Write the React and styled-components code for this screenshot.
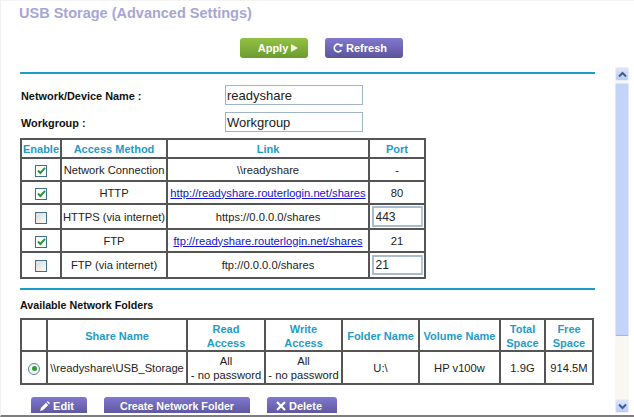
import React from "react";
import styled, { createGlobalStyle } from "styled-components";

const Global = createGlobalStyle`
  html, body { margin: 0; padding: 0; background: #fff; }
  body { width: 634px; height: 417px; overflow: hidden; font-family: "Liberation Sans", Arial, sans-serif; color: #222; }
`;

const Frame = styled.div`
  width: 634px; height: 417px; box-sizing: border-box;
  border-bottom: 2px solid #7d7d7d; border-left: 1px solid #f0f0f0;
  border-top: 1px solid #f4f4f4;
  background: #fff;
`;
const Scroller = styled.div`
  display: flex; height: 412px; overflow: hidden;
`;
const Content = styled.main`
  width: 575px; padding-left: 19px; flex: none;
`;
const Title = styled.h1`
  margin: 3px 0 0 -1px; font-size: 14.5px; line-height: 18px; font-weight: bold; color: #a6a6d6;
  white-space: nowrap;
`;
const Toolbar = styled.div`
  display: flex; gap: 17px; margin-top: 16px; padding-left: 220px;
`;
const Button = styled.button`
  display: inline-flex; align-items: center; justify-content: center; gap: 3px;
  box-sizing: border-box; width: ${p => p.$w}px; height: ${p => p.$h || 20}px;
  padding: 0 ${p => p.$pr || 0}px 0 ${p => p.$pl || 0}px; border: 0; border-radius: 3px;
  background: ${p => p.$green
    ? "linear-gradient(#93c044, #6c9c2f)"
    : "linear-gradient(#8078cf, #5c5499)"};
  color: #fff; font: bold ${p => p.$size || 11}px "Liberation Sans", Arial, sans-serif;
  flex: none;
`;
const Rule = styled.hr`
  height: 2px; margin: ${p => p.$top}px 0 0; border: 0; background: #1c9ccb; width: 575px;
`;
const Field = styled.div`
  display: flex; align-items: center; height: 20px; margin-top: ${p => p.$top}px;
`;
const Label = styled.label`
  width: 205px; flex: none; padding: 1px 0 0 1px; box-sizing: border-box;
  font-size: 10.9px; font-weight: bold; color: #111;
`;
const TextBox = styled.input`
  box-sizing: border-box; width: 138px; height: 20px; padding: 1px 1px 0; margin: 0;
  border: 1px solid #9fb4cb; font: 13px "Liberation Sans", Arial, sans-serif; color: #222; outline: 0;
`;
const Table = styled.table`
  border-collapse: collapse; table-layout: fixed; width: ${p => p.$w}px; margin-top: ${p => p.$top}px;
  font-size: 11.2px;
  text-align: center;
`;
const Head = styled.th`
  border: 2px solid #555; padding: ${p => p.$nudge ? 1 : 0}px 0 0; color: #1f9bc8; font-size: 11px; font-weight: bold; line-height: 14px;
`;
const Cell = styled.td`
  border: 2px solid #555; padding: ${p => p.$nudge ? 1 : 0}px 0 0; line-height: 14px; color: #222; white-space: nowrap;
`;
const Row = styled.tr`
  height: ${p => p.$h}px;
`;
const Link = styled.a`
  color: #1414cc; text-decoration: underline;
`;
const Box = styled.span`
  display: inline-flex; align-items: center; justify-content: center; vertical-align: middle;
  width: 12px; height: 12px; box-sizing: border-box;
  border: 1px solid #3f6f8f;
  background: ${p => p.$on ? "#fff" : "linear-gradient(135deg, #dcdcd6, #fafafa)"};
`;
const Radio = styled.span`
  display: inline-flex; align-items: center; justify-content: center; vertical-align: middle;
  width: 12px; height: 12px; box-sizing: border-box; border-radius: 50%;
  border: 1px solid #5a8299; background: #f4f6f4;
  &::after { content: ""; width: 5px; height: 5px; border-radius: 50%; background: #2f9a3a; }
`;
const PortInput = styled.input`
  display: block; box-sizing: border-box; width: 51px; height: ${p => p.$h}px; margin: 0 auto; padding: 0 2px;
  border: 2px solid #a9bccf; border-right-color: #b8c8d8; font: 12px "Liberation Sans", Arial, sans-serif; color: #222; outline: 0;
`;
const Section = styled.h2`
  margin: 8px 0 0; font-size: 10.7px; line-height: 14px; font-weight: bold; color: #111;
`;
const Actions = styled.div`
  display: flex; gap: 17px; margin-top: 12px; padding-left: 11px;
`;
const ScrollBar = styled.div`
  width: 14px; margin-left: 20px; margin-top: 66px; flex: none; height: 346px;
  background: #f8f7f2; display: flex; flex-direction: column; justify-content: space-between;
`;
const ScrollButton = styled.div`
  height: 14px; box-sizing: border-box; display: flex; align-items: center; justify-content: center;
  background: linear-gradient(#dde6fb, #bccdf2); border: 1px solid #e8eefb; border-radius: 2px;
`;
const Thumb = styled.div`
  height: 253px; margin-top: 2px; box-sizing: border-box; background: #c4d3f8;
  border: 1px solid #dde6fb; border-bottom-color: #9fb3e4; border-radius: 2px;
`;
const Track = styled.div`
  flex: 1; display: flex; flex-direction: column;
`;

const Check = () => (
  <svg width="9" height="9" viewBox="0 0 9 9"><path d="M1 4.5 L3.4 7 L8 1.8" fill="none" stroke="#1f9a2e" strokeWidth="1.9" /></svg>
);
const Chevron = ({ up }) => (
  <svg width="9" height="7" viewBox="0 0 9 7">
    <path d={up ? "M1 5.5 L4.5 2 L8 5.5" : "M1 1.5 L4.5 5 L8 1.5"} fill="none" stroke="#3d5f8f" strokeWidth="2" />
  </svg>
);
const Play = () => (
  <svg width="7" height="8" viewBox="0 0 7 8"><path d="M0 0 L7 4 L0 8 Z" fill="#f2f7e6" /></svg>
);
const Reload = () => (
  <svg width="10" height="10" viewBox="0 0 10 10">
    <path d="M8.3 3 A3.8 3.8 0 1 0 8.3 7" fill="none" stroke="#fff" strokeWidth="1.7" />
    <path d="M6 3.6 L9.6 3.6 L9.6 0.4 Z" fill="#fff" />
  </svg>
);
const Pencil = () => (
  <svg width="10" height="10" viewBox="0 0 10 10"><path d="M0 10 L1 6.8 L6 1.8 L8.2 4 L3.2 9 Z M6.8 1 L7.8 0 L10 2.2 L9 3.2 Z" fill="#fff" /></svg>
);
const Cross = () => (
  <svg width="10" height="10" viewBox="0 0 10 10"><path d="M1 1 L9 9 M9 1 L1 9" stroke="#fff" strokeWidth="2.2" /></svg>
);

const methods = [
  { h: 23, on: true, m: "Network Connection", l: "\\\\readyshare", p: "-" },
  { h: 23, on: true, m: "HTTP", href: "http://readyshare.routerlogin.net/shares", p: "80" },
  { h: 25, on: false, m: "HTTPS (via internet)", l: "https://0.0.0.0/shares", input: "443", ih: 21 },
  { h: 23, on: true, m: "FTP", href: "ftp://readyshare.routerlogin.net/shares", p: "21" },
  { h: 26, on: false, m: "FTP (via internet)", l: "ftp://0.0.0.0/shares", input: "21", ih: 20 },
];

export default function App() {
  return (
    <Frame>
      <Global />
      <Scroller>
        <Content>
          <Title>USB Storage (Advanced Settings)</Title>
          <Toolbar>
            <Button $green $w={68} $pl={8}>Apply <Play /></Button>
            <Button $w={78} $pr={8}><Reload /> Refresh</Button>
          </Toolbar>
          <Rule $top={14} />
          <Field $top={11}>
            <Label>Network/Device Name :</Label>
            <TextBox readOnly value="readyshare" />
          </Field>
          <Field $top={7}>
            <Label>Workgroup :</Label>
            <TextBox readOnly value="Workgroup" />
          </Field>
          <Table $w={404} $top={6}>
            <colgroup>
              <col style={{ width: 40 }} /><col style={{ width: 106 }} /><col style={{ width: 202 }} /><col style={{ width: 56 }} />
            </colgroup>
            <thead>
              <Row $h={19}>
                <Head>Enable</Head><Head>Access Method</Head><Head>Link</Head><Head>Port</Head>
              </Row>
            </thead>
            <tbody>
              {methods.map(r => (
                <Row key={r.m} $h={r.h}>
                  <Cell><Box $on={r.on}>{r.on && <Check />}</Box></Cell>
                  <Cell>{r.m}</Cell>
                  <Cell>{r.href ? <Link href="#">{r.href}</Link> : r.l}</Cell>
                  <Cell>{r.input ? <PortInput readOnly value={r.input} $h={r.ih} /> : r.p}</Cell>
                </Row>
              ))}
            </tbody>
          </Table>
          <Rule $top={9} />
          <Section>Available Network Folders</Section>
          <Table $w={572} $top={6}>
            <colgroup>
              <col style={{ width: 26 }} /><col style={{ width: 140 }} /><col style={{ width: 78 }} /><col style={{ width: 77 }} />
              <col style={{ width: 77 }} /><col style={{ width: 81 }} /><col style={{ width: 45 }} /><col style={{ width: 48 }} />
            </colgroup>
            <thead>
              <Row $h={32}>
                <Head></Head><Head $nudge>Share Name</Head><Head $nudge>Read<br />Access</Head><Head $nudge>Write<br />Access</Head>
                <Head $nudge>Folder Name</Head><Head $nudge>Volume Name</Head><Head $nudge>Total<br />Space</Head><Head $nudge>Free<br />Space</Head>
              </Row>
            </thead>
            <tbody>
              <Row $h={33}>
                <Cell><Radio /></Cell>
                <Cell>\\readyshare\USB_Storage</Cell>
                <Cell $nudge>All<br />- no password</Cell>
                <Cell $nudge>All<br />- no password</Cell>
                <Cell>U:\</Cell>
                <Cell>HP v100w</Cell>
                <Cell>1.9G</Cell>
                <Cell>914.5M</Cell>
              </Row>
            </tbody>
          </Table>
          <Actions>
            <Button $w={56} $h={18} $pr={4}><Pencil /> Edit</Button>
            <Button $w={146} $h={18} $size={10.7}>Create Network Folder</Button>
            <Button $w={70} $h={18} $pr={6}><Cross /> Delete</Button>
          </Actions>
        </Content>
        <ScrollBar>
          <Track>
            <ScrollButton><Chevron up /></ScrollButton>
            <Thumb />
          </Track>
          <ScrollButton><Chevron /></ScrollButton>
        </ScrollBar>
      </Scroller>
    </Frame>
  );
}
